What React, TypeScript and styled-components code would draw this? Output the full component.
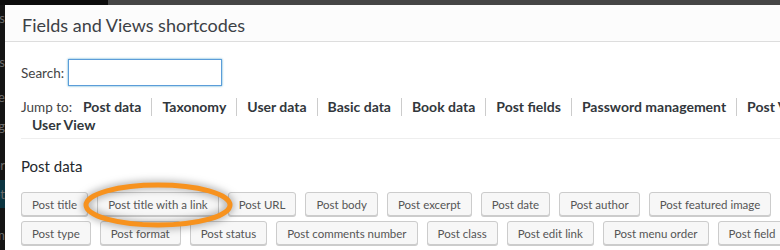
import styled, { createGlobalStyle } from "styled-components";

const jumpLinks = [
  "Post data",
  "Taxonomy",
  "User data",
  "Basic data",
  "Book data",
  "Post fields",
  "Password management",
  "Post View",
  "User View",
];

const firstRow = [
  "Post title",
  "Post title with a link",
  "Post URL",
  "Post body",
  "Post excerpt",
  "Post date",
  "Post author",
  "Post featured image",
  "Post id",
];

const secondRow = [
  "Post type",
  "Post format",
  "Post status",
  "Post comments number",
  "Post class",
  "Post edit link",
  "Post menu order",
  "Post field",
];

// admin menu behind the modal, only the last letters peek out
const sideItems = [
  { label: "Posts", gap: 6, active: false },
  { label: "Pages", gap: 30, active: false },
  { label: "Profile", gap: 21, active: false },
  { label: "Tag", gap: 15, active: false },
  { label: "Editor", gap: 25, active: false },
  { label: "Toolset", gap: 8, active: true },
  { label: "Custom", gap: 20, active: false },
];

const App = () => {
  return (
    <Page>
      <GlobalStyle />
      <TopStrip>
        <TopDark />
        <TopGray />
      </TopStrip>
      <Body>
        <SideMenu>
          {sideItems.map(({ label, gap, active }) => (
            <SideItem key={label} $gap={gap} $active={active}>
              {label}
            </SideItem>
          ))}
        </SideMenu>
        <Dialog>
          <TitleBar>Fields and Views shortcodes</TitleBar>
          <Content>
            <SearchRow>
              <Label>Search:</Label>
              <SearchInput />
            </SearchRow>
            <JumpRow>
              <Label>Jump to:</Label>
              {jumpLinks.map((link, i) => (
                <JumpLink key={link} $sep={i > 0 && link !== "User View"}>
                  {link}
                </JumpLink>
              ))}
            </JumpRow>
            <Divider />
            <GroupTitle>Post data</GroupTitle>
            <ButtonArea>
              <ButtonRow>
                {firstRow.map((b) => (
                  <FieldButton key={b}>{b}</FieldButton>
                ))}
              </ButtonRow>
              <ButtonRow>
                {secondRow.map((b) => (
                  <FieldButton key={b}>{b}</FieldButton>
                ))}
              </ButtonRow>
              <Highlight viewBox="0 0 154 50">
                <ellipse
                  cx="77"
                  cy="25"
                  rx="72"
                  ry="20"
                  fill="none"
                  stroke="#f7921e"
                  strokeWidth="5"
                />
              </Highlight>
            </ButtonArea>
          </Content>
        </Dialog>
      </Body>
    </Page>
  );
};

const GlobalStyle = createGlobalStyle`
  html, body {
    margin: 0;
    padding: 0;
    background: #111;
    overflow: hidden;
  }
`;

const Page = styled.div`
  display: flex;
  flex-direction: column;
  width: 780px;
  height: 250px;
  overflow: hidden;
  font-family: Lato, "Open Sans", sans-serif;
`;

const TopStrip = styled.div`
  display: flex;
  height: 5px;
  flex-shrink: 0;
`;

const TopDark = styled.div`
  width: 108px;
  background: #0c0c0c;
`;

const TopGray = styled.div`
  flex: 1;
  background: #464646;
`;

const Body = styled.div`
  display: flex;
  flex: 1;
  min-height: 0;
`;

const SideMenu = styled.div`
  display: flex;
  flex-direction: column;
  width: 5px;
  flex-shrink: 0;
  background: #141414;
  overflow: hidden;
`;

const SideItem = styled.div<{ $gap: number; $active: boolean }>`
  display: flex;
  justify-content: flex-end;
  align-items: center;
  height: ${({ $active }) => ($active ? "28px" : "14px")};
  margin-top: ${({ $gap }) => $gap}px;
  font-size: 13px;
  color: #6a6a6a;
  white-space: nowrap;
  flex-shrink: 0;
  background: ${({ $active }) => ($active ? "#0b3440" : "transparent")};
`;

const Dialog = styled.div`
  display: flex;
  flex-direction: column;
  width: 850px;
  flex-shrink: 0;
  background: #fff;
`;

const TitleBar = styled.div`
  box-sizing: border-box;
  height: 37px;
  display: flex;
  align-items: center;
  padding: 3px 0 0 17px;
  background: #fcfcfc;
  border-bottom: 1px solid #dddddd;
  font-size: 18px;
  color: #3c4146;
`;

const Content = styled.div`
  display: flex;
  flex-direction: column;
  padding: 0 16px;
`;

const SearchRow = styled.div`
  display: flex;
  align-items: center;
  gap: 4px;
  margin-top: 17px;
`;

const Label = styled.span`
  font-size: 13.5px;
  color: #444;
`;

const SearchInput = styled.input`
  width: 154px;
  height: 27px;
  box-sizing: border-box;
  border: 1px solid #5b9dd9;
  box-shadow: 0 0 2px rgba(30, 140, 190, 0.8);
  outline: none;
  background: #fff;
  margin: 0;
`;

const JumpRow = styled.div`
  display: flex;
  flex-wrap: wrap;
  align-items: center;
  margin-top: 12px;
  line-height: 18px;
`;

const JumpLink = styled.span<{ $sep: boolean }>`
  padding: 0 10px;
  font-size: 14px;
  font-weight: 700;
  color: #32373c;
  border-left: 1px solid ${({ $sep }) => ($sep ? "#cccccc" : "transparent")};
`;

const Divider = styled.div`
  height: 1px;
  background: #eeeeee;
  margin-top: 4px;
`;

const GroupTitle = styled.div`
  font-size: 15px;
  line-height: 20px;
  color: #23282d;
  margin-top: 17px;
`;

const ButtonArea = styled.div`
  position: relative;
  display: flex;
  flex-direction: column;
  gap: 5px;
  margin-top: 16px;
`;

const ButtonRow = styled.div`
  display: flex;
  gap: 9px;
`;

const FieldButton = styled.div`
  display: flex;
  align-items: center;
  box-sizing: border-box;
  height: 24px;
  padding: 0 10px;
  flex-shrink: 0;
  font-size: 11.5px;
  color: #555;
  background: #f7f7f7;
  border: 1px solid #cccccc;
  border-radius: 3px;
  box-shadow: 0 1px 0 #cccccc;
  white-space: nowrap;
`;

const Highlight = styled.svg`
  position: absolute;
  left: 60px;
  top: -12px;
  width: 154px;
  height: 50px;
  overflow: visible;
  filter: drop-shadow(0 0 4px rgba(0, 0, 0, 0.5));
`;

export default App;
